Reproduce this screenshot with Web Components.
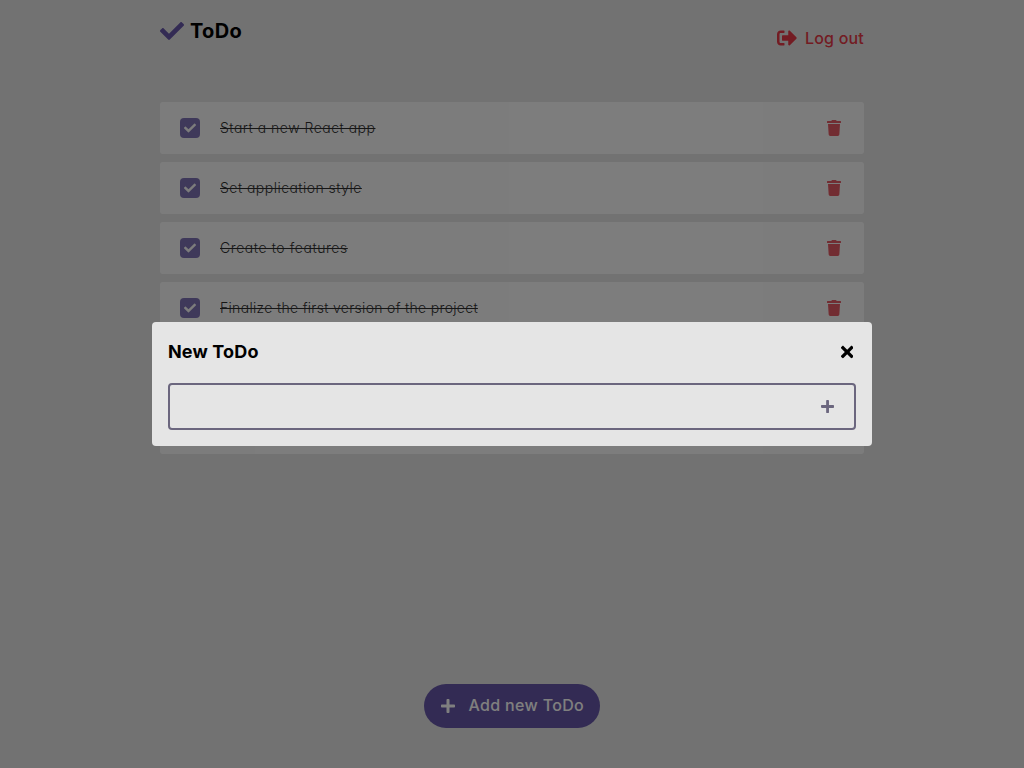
<!DOCTYPE html>
<html lang="en">
<head>
<meta charset="utf-8">
<title>ToDo</title>
<style>
html,body{margin:0;height:100%;overflow:hidden;background:#e5e5e5}
body{font-family:Inter,"Open Sans",sans-serif;font-feature-settings:"cv11";color:#000}
</style>
</head>
<body>
<todo-app></todo-app>
<script>
const ICONS = {
  check: [512, 'M173.898 439.404l-166.4-166.4c-9.997-9.997-9.997-26.206 0-36.204l36.203-36.204c9.997-9.998 26.207-9.998 36.204 0L192 312.69 432.095 72.596c9.997-9.997 26.207-9.997 36.204 0l36.203 36.204c9.997 9.997 9.997 26.206 0 36.204l-294.4 294.401c-9.998 9.997-26.207 9.997-36.204-.001z'],
  logout: [512, 'M497 273L329 441c-15 15-41 4.5-41-17v-96H152c-13.3 0-24-10.7-24-24v-96c0-13.3 10.7-24 24-24h136V88c0-21.4 25.9-32 41-17l168 168c9.3 9.4 9.3 24.6 0 34zM192 436v-40c0-6.6-5.4-12-12-12H96c-17.7 0-32-14.3-32-32V160c0-17.7 14.3-32 32-32h84c6.6 0 12-5.4 12-12V76c0-6.6-5.4-12-12-12H96c-53 0-96 43-96 96v192c0 53 43 96 96 96h84c6.6 0 12-5.4 12-12z'],
  trash: [448, 'M432 32H312l-9.4-18.7A24 24 0 0 0 281.1 0H166.8a23.72 23.72 0 0 0-21.4 13.3L136 32H16A16 16 0 0 0 0 48v32a16 16 0 0 0 16 16h416a16 16 0 0 0 16-16V48a16 16 0 0 0-16-16zM53.2 467a48 48 0 0 0 47.9 45h245.8a48 48 0 0 0 47.9-45L416 128H32z'],
  times: [352, 'M242.72 256l100.07-100.07c12.28-12.28 12.28-32.19 0-44.48l-22.24-22.24c-12.28-12.28-32.19-12.28-44.48 0L176 189.28 75.93 89.21c-12.28-12.28-32.19-12.28-44.48 0L9.21 111.45c-12.28 12.28-12.28 32.19 0 44.48L109.28 256 9.21 356.07c-12.28 12.28-12.28 32.19 0 44.48l22.24 22.24c12.28 12.28 32.2 12.28 44.48 0L176 322.72l100.07 100.07c12.28 12.28 32.2 12.28 44.48 0l22.24-22.24c12.28-12.28 12.28-32.19 0-44.48L242.72 256z'],
  plus: [448, 'M416 208H272V64c0-17.67-14.33-32-32-32h-32c-17.67 0-32 14.33-32 32v144H32c-17.67 0-32 14.33-32 32v32c0 17.67 14.33 32 32 32h144v144c0 17.67 14.33 32 32 32h32c17.67 0 32-14.33 32-32V304h144c17.67 0 32-14.33 32-32v-32c0-17.67-14.33-32-32-32z']
};
function define(name, html, init) {
  customElements.define(name, class extends HTMLElement {
    constructor() {
      super();
      this.attachShadow({mode: 'open'}).innerHTML = html;
    }
    connectedCallback() { if (init) init(this, this.shadowRoot); }
  });
}
define('todo-icon', '<style>:host{display:block;flex:none}svg{display:block;fill:currentColor}</style><svg><path/></svg>', (el, root) => {
  const [w, d] = ICONS[el.getAttribute('name')];
  const size = +el.getAttribute('size');
  const svg = root.querySelector('svg');
  svg.setAttribute('viewBox', `0 0 ${w} 512`);
  svg.setAttribute('width', size * w / 512);
  svg.setAttribute('height', size);
  root.querySelector('path').setAttribute('d', d);
});
define('todo-header', `<style>
:host{display:flex;justify-content:space-between;height:62px}
.logo{display:flex;align-items:center;gap:6px;height:30px;font-weight:700;font-size:20px;line-height:30px;letter-spacing:.3px}
.logo todo-icon{color:var(--purple)}
.logout{display:flex;align-items:center;gap:8px;height:24px;margin-top:10px;font-weight:500;font-size:16px;line-height:24px;letter-spacing:.2px;color:#e63946}
</style>
<div class="logo"><todo-icon name="check" size="24"></todo-icon><span>ToDo</span></div>
<div class="logout"><todo-icon name="logout" size="20"></todo-icon><span>Log out</span></div>`);
define('todo-item', `<style>
:host{display:flex;align-items:center;box-sizing:border-box;height:52px;padding:0 23px 0 20px;border-radius:3px;background:#fff;opacity:.8}
.box{display:flex;align-items:center;justify-content:center;width:20px;height:20px;border-radius:4px;background:var(--purple);color:#fff}
.text{flex:1;margin-left:20px;padding-bottom:2px;font-size:14px;line-height:21px;font-weight:300;letter-spacing:var(--tracking,0);color:#000}
.text span{text-decoration:line-through;text-decoration-thickness:1px}
.trash{color:#e63946}
</style>
<div class="box"><todo-icon name="check" size="12"></todo-icon></div>
<div class="text"><span><slot></slot></span></div>
<todo-icon class="trash" name="trash" size="16"></todo-icon>`);
define('add-button', `<style>
:host{display:flex;align-items:center;box-sizing:border-box;width:176px;height:44px;padding:0 17px;border-radius:22px;background:var(--purple);color:#fff;font-weight:500;font-size:16px;line-height:24px}
span{margin-left:13.5px;padding-bottom:2px;white-space:nowrap;letter-spacing:.33px}
</style><todo-icon name="plus" size="16"></todo-icon><span><slot></slot></span>`);
define('todo-modal', `<style>
:host{position:fixed;inset:0;display:flex;align-items:center;justify-content:center;background:rgba(0,0,0,.5)}
.panel{box-sizing:border-box;width:720px;height:124px;padding:16px;border-radius:4px;background:#e5e5e5}
.head{display:flex;align-items:center;justify-content:space-between;height:27px;padding-right:3px;font-weight:700;font-size:18px;line-height:27px;letter-spacing:.15px}
.field{display:flex;align-items:center;justify-content:flex-end;box-sizing:border-box;height:47px;margin-top:18px;padding-right:20px;border:2px solid #6b667e;border-radius:4px;color:#6b667e}
</style>
<div class="panel">
<div class="head"><span><slot></slot></span><todo-icon name="times" size="18"></todo-icon></div>
<div class="field"><todo-icon name="plus" size="15"></todo-icon></div>
</div>`);
define('todo-app', `<style>
:host{display:flex;flex-direction:column;box-sizing:border-box;width:720px;height:100vh;margin:0 auto;padding:16px 8px 40px;--purple:#6657a8}
.list{display:grid;gap:8px;margin-top:24px}
add-button{margin:auto auto 0}
</style>
<todo-header></todo-header>
<div class="list">
<todo-item style="--tracking:.5px">Start a new React app</todo-item>
<todo-item style="--tracking:.47px">Set application style</todo-item>
<todo-item style="--tracking:.57px">Create to features</todo-item>
<todo-item style="--tracking:.31px">Finalize the first version of the project</todo-item>
<todo-item></todo-item>
<todo-item></todo-item>
</div>
<add-button>Add new ToDo</add-button>
<todo-modal>New ToDo</todo-modal>`);
</script>
</body>
</html>
